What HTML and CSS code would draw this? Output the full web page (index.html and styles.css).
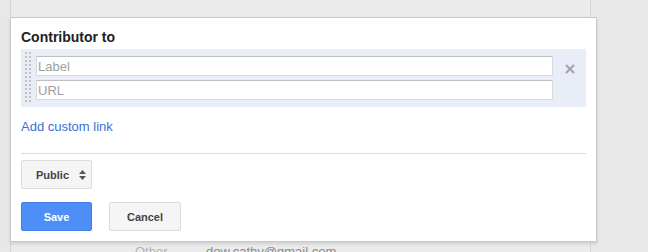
FILE: index.html
```html
<!DOCTYPE html>
<html lang="en">
<head>
    <meta charset="UTF-8">
    <title>Contributor to</title>
    <link rel="stylesheet" href="styles.css">
</head>
<body>
<div class="sheet">
    <div class="sheet-row">
        <span class="sheet-label">Other</span>
        <span class="sheet-value">dow.cathy@gmail.com</span>
    </div>
</div>

<div class="dialog">
    <h2 class="dialog-title">Contributor to</h2>
    <div class="link-row">
        <span class="drag-handle"></span>
        <div class="link-fields">
            <input type="text" placeholder="Label">
            <input type="text" placeholder="URL">
        </div>
        <button class="remove" type="button" title="Remove">
            <svg width="10" height="10" viewBox="0 0 10 10"><path d="M1 1 L9 9 M9 1 L1 9" stroke="#a3a3a3" stroke-width="2"/></svg>
        </button>
    </div>
    <a class="add-link" href="#">Add custom link</a>
    <div class="divider"></div>
    <div class="visibility">
        <span>Public</span>
        <svg width="7" height="10" viewBox="0 0 7 10"><path d="M0 4 L3.5 0 L7 4Z M0 6 L7 6 L3.5 10Z" fill="#555"/></svg>
    </div>
    <div class="actions">
        <button class="btn btn-primary" type="button">Save</button>
        <button class="btn" type="button">Cancel</button>
    </div>
</div>
</body>
</html>
```

FILE: styles.css
```css
body {
    margin: 0;
    background: #e8e8e8;
    font-family: "Liberation Sans", Arial, sans-serif;
    height: 252px;
    overflow: hidden;
    position: relative;
}
.sheet {
    margin-left: 10px;
    width: 579px;
    height: 252px;
    border-left: 1px solid #d8d8d8;
    border-right: 1px solid #d8d8d8;
    background: #ebebeb;
}
.sheet-row {
    display: flex;
    padding-top: 244px;
    padding-left: 124px;
    font-size: 13px;
    line-height: 16px;
}
.sheet-label {
    color: #b0b0b0;
    width: 71px;
}
.sheet-value {
    color: #8a8a8a;
}
.dialog {
    position: absolute;
    left: 10px;
    top: 17px;
    width: 565px;
    padding: 11px 10px 10px;
    background: #fff;
    border: 1px solid #c8c8c8;
    box-shadow: 0 2px 3px rgba(0, 0, 0, 0.12);
}
.dialog-title {
    margin: 0 0 4px;
    font-size: 14px;
    line-height: 16px;
    font-weight: bold;
    color: #222;
}
.link-row {
    display: flex;
    align-items: flex-start;
    height: 58px;
    box-sizing: border-box;
    padding: 7px 0 0 4px;
    background: #e8edf7;
}
.drag-handle {
    width: 2px;
    height: 50px;
    margin-top: -4px;
    border-left: 2px dotted #c2c2c2;
    border-right: 2px dotted #c2c2c2;
}
.link-fields {
    display: flex;
    flex-direction: column;
    gap: 4px;
    margin-left: 5px;
}
.link-fields input {
    width: 517px;
    height: 20px;
    box-sizing: border-box;
    margin: 0;
    padding: 0 1px;
    border: 1px solid #d9d9d9;
    border-top-color: #c0c0c0;
    border-radius: 0;
    font-family: inherit;
    font-size: 13px;
    color: #222;
    background: #fff;
    outline: none;
}
.link-fields input::placeholder {
    color: #a0a0a0;
}
.remove {
    margin: 8px 0 0 12px;
    padding: 0;
    border: none;
    background: none;
    width: 10px;
    height: 10px;
    display: flex;
    cursor: pointer;
}
.add-link {
    display: block;
    margin-top: 12px;
    font-size: 13px;
    line-height: 16px;
    color: #3b6fd6;
    text-decoration: none;
}
.divider {
    height: 1px;
    margin-top: 18px;
    background: #dcdcdc;
}
.visibility {
    display: flex;
    align-items: center;
    justify-content: space-between;
    margin-top: 6px;
    width: 71px;
    height: 29px;
    box-sizing: border-box;
    padding: 0 5px 0 14px;
    background: #f5f5f5;
    border: 1px solid #dcdcdc;
    border-radius: 2px;
    font-size: 11px;
    font-weight: bold;
    color: #444;
}
.actions {
    display: flex;
    gap: 17px;
    margin-top: 13px;
}
.btn {
    width: 72px;
    height: 29px;
    padding: 0;
    background: #f5f5f5;
    border: 1px solid #dcdcdc;
    border-radius: 2px;
    font-family: inherit;
    font-size: 11px;
    font-weight: bold;
    color: #444;
    cursor: pointer;
}
.btn-primary {
    width: 71px;
    background: #4d8ff6;
    border-color: #3f7fe8;
    color: #fff;
}
```
